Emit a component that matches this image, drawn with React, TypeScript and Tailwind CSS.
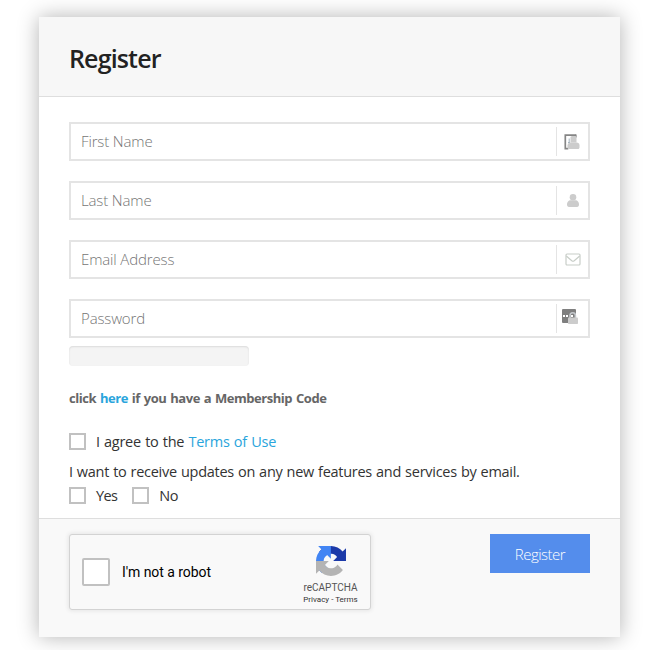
import type { ReactNode } from 'react';

interface Field {
  name: string;
  label: string;
  type: string;
  icon: ReactNode;
  iconClass: string;
}

function FirstNameIcon() {
  return (
    <svg width="16" height="16" viewBox="0 0 16 16" fill="none">
      <path d="M12 1.200H1.300v13.400h3" stroke="#858585" strokeWidth="1.700" />
      <path d="M12 .5v3" stroke="#858585" strokeWidth="1.300" />
      <path d="M5.200 4.500v5M4 8.500h2" stroke="#a5b4c0" strokeWidth="1" />
      <path d="M6.500 3.500q0-1.500 1.500-1.500h3q1.500 0 1.500 1.500v5h-6z" fill="#cccccc" />
      <path d="M3.500 13.500v-2c0-2 1.500-3 3-3h6c1.800 0 3 .9 3 2.700v2.300c0 .9-.6 1.500-1.500 1.500H5c-.9 0-1.500-.6-1.500-1.500z" fill="#cccccc" />
    </svg>
  );
}

function UserIcon() {
  return (
    <svg width="16" height="16" viewBox="0 0 16 16" fill="#cccccc">
      <circle cx="8" cy="5.200" r="3.300" />
      <path d="M4.700 8.200h6.600c1.800.8 2.700 2.200 2.700 4 0 1.700-.7 2.800-2 2.800H4c-1.300 0-2-1.100-2-2.800 0-1.800.9-3.200 2.700-4z" />
    </svg>
  );
}

function MailIcon() {
  return (
    <svg width="16" height="16" viewBox="0 0 16 16" fill="none" stroke="#c8cec8" strokeWidth="1.200">
      <rect x="1" y="3" width="14" height="11" rx="1" />
      <path d="M1.300 5 6.800 9.800q1.200.9 2.400 0l5.500-4.800" />
    </svg>
  );
}

function PasswordIcon() {
  return (
    <svg width="17" height="16" viewBox="0 0 17 16">
      <rect x="0" y="0" width="14" height="14" rx="1" fill="#7f7f7f" />
      <path d="M1 6h2v2H1zM4 6h2v2H4zM9 6h2v2H9z" fill="#ffffff" />
      <path d="M8 9V6.500a2.700 2.700 0 0 1 5.400 0V9" fill="none" stroke="#c4c8cc" strokeWidth="1.600" />
      <rect x="6" y="8.500" width="10" height="6.500" rx=".8" fill="#cccccc" />
    </svg>
  );
}

const fields: Field[] = [
  { name: 'firstName', label: 'First Name', type: 'text', icon: <FirstNameIcon />, iconClass: 'pr-px' },
  { name: 'lastName', label: 'Last Name', type: 'text', icon: <UserIcon />, iconClass: 'pb-[2px] pl-px' },
  { name: 'email', label: 'Email Address', type: 'email', icon: <MailIcon />, iconClass: 'pb-px pl-px' },
  { name: 'password', label: 'Password', type: 'password', icon: <PasswordIcon />, iconClass: 'pr-[5px] pb-[4px]' },
];

function FieldRow({ field }: { field: Field }) {
  return (
    <div className="flex h-[39px] items-center border-2 border-[#e4e4e4] bg-white">
      <input
        name={field.name}
        type={field.type}
        placeholder={field.label}
        className="h-full min-w-0 flex-1 bg-transparent pb-[2px] pl-[10px] text-[15px] font-light tracking-[-0.14px] outline-none placeholder:text-[#747474] placeholder:opacity-100"
      />
      <span className={`flex h-[29px] w-8 items-center justify-center border-l border-[#e4e4e4] ${field.iconClass}`}>
        {field.icon}
      </span>
    </div>
  );
}

function Checkbox({ label }: { label: string }) {
  return (
    <input
      type="checkbox"
      aria-label={label}
      className="size-[17px] shrink-0 appearance-none border-2 border-[#c1c1c1] bg-white"
    />
  );
}

function RecaptchaLogo() {
  return (
    <svg width="30" height="30" viewBox="0 0 64 64">
      <path fill="#1c3aa9" d="M64 31.955a33 33 0 0 0-.032-1.370V4.687l-7.160 7.160C50.948 4.674 42.033.093 32.050.093c-10.390 0-19.622 4.960-25.458 12.640l11.736 11.860a15.550 15.550 0 0 1 4.754-5.334c2.050-1.600 4.952-2.906 8.968-2.906.485 0 .860.057 1.135.163 4.976.393 9.288 3.140 11.828 7.124l-8.307 8.307c10.522-.04 22.408-.066 27.294.005" />
      <path fill="#4285f4" d="M31.862.094a33 33 0 0 0-1.370.032H4.594l7.160 7.160C4.580 13.147 0 22.060 0 32.046c0 10.390 4.960 19.622 12.640 25.458L24.500 45.768a15.550 15.550 0 0 1-5.334-4.754c-1.600-2.050-2.906-4.952-2.906-8.968 0-.485.057-.860.163-1.135.393-4.976 3.140-9.288 7.124-11.828l8.307 8.307c-.04-10.522-.066-22.408.005-27.294" />
      <path fill="#b4b4b4" d="M.001 32.045c.005.460.015.915.032 1.370v25.898l7.160-7.160c5.860 7.173 14.774 11.754 24.760 11.754 10.390 0 19.622-4.960 25.458-12.640l-11.736-11.860a15.550 15.550 0 0 1-4.754 5.334c-2.050 1.600-4.952 2.906-8.968 2.906-.485 0-.860-.057-1.135-.163-4.976-.393-9.288-3.140-11.828-7.124l8.307-8.307c-10.522.04-22.408.066-27.294-.005" />
    </svg>
  );
}

function Recaptcha() {
  return (
    <div className="flex h-[76px] w-[302px] items-center justify-between rounded-[3px] border border-[#d3d3d3] bg-[#f9f9f9] pl-3 font-['Roboto',sans-serif] text-black shadow-[0_0_4px_1px_rgba(0,0,0,0.08)]">
      <div className="flex items-center gap-3">
        <input
          type="checkbox"
          aria-label="I'm not a robot"
          className="size-7 appearance-none rounded-[2px] border-2 border-[#c1c1c1] bg-white"
        />
        <span className="text-[14px] leading-[17px] tracking-[-0.05px]">I'm not a robot</span>
      </div>
      <div className="flex w-[79px] flex-col items-center pt-[7px] text-[#555555]">
        <RecaptchaLogo />
        <div className="mt-[7px] text-[10px] leading-[10px]">reCAPTCHA</div>
        <div className="mt-[2px] text-[8px] leading-[10px] text-[#333333]">Privacy - Terms</div>
      </div>
    </div>
  );
}

export default function App() {
  return (
    <div className="h-[650px] overflow-hidden bg-white pt-[17px] pl-[39px] font-['Open_Sans','Noto_Sans',sans-serif] text-[#333333]">
      <form className="flex h-[620px] w-[581px] flex-col bg-white shadow-[0_0_20px_rgba(0,0,0,0.3)]">
        <header className="flex h-20 items-center border-b border-[#dedede] bg-[#f7f7f7] px-[30px] pt-[2px]">
          <h1 className="text-[25px] leading-8 font-semibold tracking-[-0.85px] text-[#222222]">Register</h1>
        </header>

        <div className="flex h-[421px] flex-col px-[30px] pt-[25px]">
          <div className="flex flex-col gap-5">
            {fields.map((f) => <FieldRow key={f.name} field={f} />)}
          </div>
          <div className="mt-2 h-5 w-[180px] rounded-[4px] bg-[#f4f4f4] shadow-[inset_0_1px_2px_rgba(0,0,0,0.1)]" />

          <p className="mt-[22px] text-[13px] leading-5 font-bold tracking-[-0.45px] [word-spacing:0.9px] whitespace-nowrap text-[#666666]">
            click <a className="text-[#2aa5dc]">here</a> if you have a Membership Code
          </p>

          <label className="mt-[24px] flex h-[18px] items-center gap-[10px] text-[14.5px] tracking-[-0.27px] [word-spacing:0.8px] whitespace-nowrap">
            <Checkbox label="Terms of Use" />
            <span className="pt-[2px]">I agree to the <a className="text-[#2aa5dc]">Terms of Use</a></span>
          </label>

          <p className="mt-[12px] text-[14.5px] leading-5 tracking-[-0.27px] [word-spacing:0.55px] whitespace-nowrap">
            I want to receive updates on any new features and services by email.
          </p>
          <div className="mt-[4px] flex h-[18px] items-center gap-[15px] text-[14.5px] tracking-[-0.6px]">
            <label className="flex items-center gap-[10px]"><Checkbox label="Yes" /><span className="pt-[2px]">Yes</span></label>
            <label className="flex items-center gap-[10px]"><Checkbox label="No" /><span className="pt-[2px]">No</span></label>
          </div>
        </div>

        <footer className="flex flex-1 items-start justify-between border-t border-[#dedede] bg-[#f9f9f9] px-[30px] pt-[15px]">
          <Recaptcha />
          <button type="button" className="h-[39px] w-[100px] bg-[#548dec] pt-[2px] text-[15px] font-light tracking-[-0.5px] text-white">
            Register
          </button>
        </footer>
      </form>
    </div>
  );
}
